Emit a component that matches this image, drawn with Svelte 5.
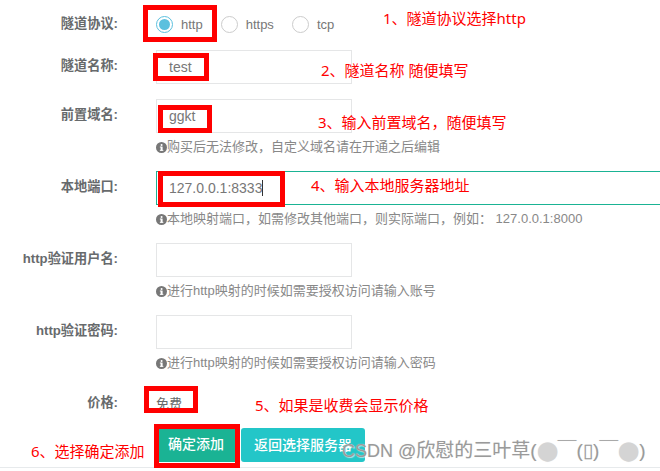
<script>
  const fields = [
    { label: '隧道名称:', value: 'test' },
    { label: '前置域名:', value: 'ggkt', hint: '购买后无法修改\uFF0C自定义域名请在开通之后编辑' },
    { label: '本地端口:', value: '127.0.0.1:8333', focus: true, hint: '本地映射端口\uFF0C如需修改其他端口\uFF0C则实际端口\uFF0C例如\uFF1A 127.0.0.1:8000' },
    { label: 'http验证用户名:', value: '', hint: '进行http映射的时候如需要授权访问请输入账号' },
    { label: 'http验证密码:', value: '', hint: '进行http映射的时候如需要授权访问请输入密码' }
  ];
  const notes = [
    { text: '1、隧道协议选择http', x: 383, y: 7 },
    { text: '2、隧道名称 随便填写', x: 321, y: 59 },
    { text: '3、输入前置域名\uFF0C随便填写', x: 318, y: 111 },
    { text: '4、输入本地服务器地址', x: 311, y: 174 },
    { text: '5、如果是收费会显示价格', x: 255, y: 394 },
    { text: '6、选择确定添加', x: 31, y: 440 }
  ];
  const boxes = [
    { x: 143, y: 5, w: 74, h: 37 },
    { x: 153, y: 53, w: 56, h: 28 },
    { x: 158, y: 105, w: 54, h: 28 },
    { x: 158, y: 171, w: 127, h: 36 },
    { x: 144, y: 386, w: 54, h: 27 },
    { x: 154, y: 424, w: 86, h: 44 }
  ];
  const macron = '\uFFE3';
</script>

<div class="page">
  <form class="form">
    <div class="row radios-row">
      <span class="label">隧道协议:</span>
      <div class="radios">
        <span class="radio-item first"><i class="radio on"></i>http</span>
        <span class="radio-item"><i class="radio"></i>https</span>
        <span class="radio-item"><i class="radio"></i>tcp</span>
      </div>
    </div>

    {#each fields as f}
      <div class="row">
        <span class="label">{f.label}</span>
        <div class="control" class:wide={f.focus}>
          <div class="input" class:focus={f.focus}>{f.value}{#if f.focus}<span class="caret"></span>{/if}</div>
          {#if f.hint}
            <p class="hint">
              <svg viewBox="0 0 12 12" width="11" height="11"><circle cx="6" cy="6" r="6" fill="#777" /><rect x="5" y="5" width="2.2" height="4.4" fill="#fff" /><rect x="4.2" y="8.6" width="3.8" height="1" fill="#fff" /><rect x="4.2" y="5" width="1.5" height="1" fill="#fff" /><circle cx="6.1" cy="3.2" r="1.1" fill="#fff" /></svg>{f.hint}
            </p>
          {/if}
        </div>
      </div>
    {/each}

    <div class="row price-row">
      <span class="label">价格:</span>
      <span class="price">免费</span>
    </div>

    <div class="actions">
      <button type="button" class="btn primary">确定添加</button>
      <button type="button" class="btn info">返回选择服务器</button>
    </div>
  </form>

  {#each boxes as b}
    <div class="mark" style="left:{b.x}px;top:{b.y}px;width:{b.w}px;height:{b.h}px"></div>
  {/each}
  {#each notes as n}
    <span class="note" style="left:{n.x}px;top:{n.y}px">{n.text}</span>
  {/each}

  <span class="watermark">CSDN @<em>欣慰的三叶草(<b>⬤</b>{macron}(▯){macron}<b>⬤</b>)</em></span>
</div>

<style>
  :global(body) {
    margin: 0;
    background: #fff;
  }
  .page {
    position: relative;
    width: 660px;
    height: 471px;
    overflow: hidden;
    font-family: "Liberation Sans", "Noto Sans CJK SC", sans-serif;
    font-size: 13px;
    color: #676a6c;
  }
  .form {
    height: 468px;
    padding-top: 7px;
    box-sizing: border-box;
    border-bottom: 1px solid #e7eaec;
  }
  .row {
    display: flex;
    margin-bottom: 15px;
  }
  .radios-row {
    height: 34px;
    margin-bottom: 9px;
  }
  .label {
    flex: none;
    width: 118px;
    margin-right: 38px;
    text-align: right;
    font-weight: 700;
    font-size: 13.2px;
    padding-top: 6px;
    line-height: 20px;
    white-space: nowrap;
  }
  .radios-row .label {
    padding-top: 7px;
  }
  .control {
    width: 196px;
    flex: none;
  }
  .control.wide {
    flex: 1;
    width: auto;
  }
  .input {
    box-sizing: border-box;
    height: 34px;
    border: 1px solid #e5e6e7;
    padding: 0 12px;
    line-height: 30px;
    font-size: 14px;
    color: #777;
    display: flex;
    align-items: center;
  }
  .input.focus {
    border-color: #1ab394;
    border-right: 0;
  }
  .caret {
    width: 1px;
    height: 16px;
    background: #333;
  }
  .hint {
    margin: 5px 0 0;
    height: 18px;
    line-height: 18px;
    font-size: 13px;
    color: #888;
    white-space: pre;
    display: flex;
    align-items: center;
  }
  .hint svg {
    flex: none;
  }
  .radios {
    display: flex;
    align-items: center;
    height: 34px;
  }
  .radio-item {
    display: flex;
    align-items: center;
    font-size: 13px;
    color: #777;
    margin-left: 18px;
  }
  .radio-item.first {
    margin-left: 0;
  }
  .radio {
    box-sizing: border-box;
    width: 17px;
    height: 17px;
    border-radius: 50%;
    border: 1px solid #ccc;
    margin-right: 8px;
    position: relative;
  }
  .radio.on {
    border-color: #5bc0de;
  }
  .radio.on::after {
    content: "";
    position: absolute;
    inset: 2px;
    border-radius: 50%;
    background: #5bc0de;
  }
  .price-row {
    margin-bottom: 8px;
    height: 33px;
  }
  .price {
    padding-top: 7px;
    line-height: 20px;
    color: #676a6c;
  }
  .actions {
    display: flex;
    gap: 4px;
    padding-left: 159px;
    align-items: flex-start;
  }
  .btn {
    font: 500 14px "Liberation Sans", "Noto Sans CJK SC", sans-serif;
    color: #fff;
    border: 0;
    padding: 0;
  }
  .primary {
    width: 78px;
    height: 33px;
    margin-top: 1px;
    padding: 0 4px 5px 0;
    background: #1ab394;
  }
  .info {
    width: 124px;
    height: 34px;
    padding-bottom: 2px;
    background: #23c6c8;
    border-radius: 3px;
  }
  .mark {
    position: absolute;
    box-sizing: border-box;
    border: 5px solid #f00;
  }
  .note {
    position: absolute;
    font-size: 15px;
    line-height: 22px;
    color: #f00;
    white-space: nowrap;
    font-family: "Noto Sans", "Noto Sans CJK SC", sans-serif;
  }
  .watermark {
    position: absolute;
    left: 342px;
    top: 439px;
    font-size: 18px;
    line-height: 24px;
    color: #9a9a9a;
    white-space: nowrap;
    text-shadow: 0 0 1px #e0e0e0, 1px 1px 1px rgba(255, 255, 255, 0.6);
  }
  .watermark em {
    font-style: normal;
    font-size: 19px;
  }
  .watermark b {
    font-weight: 400;
    color: #d4d4d4;
  }
</style>
